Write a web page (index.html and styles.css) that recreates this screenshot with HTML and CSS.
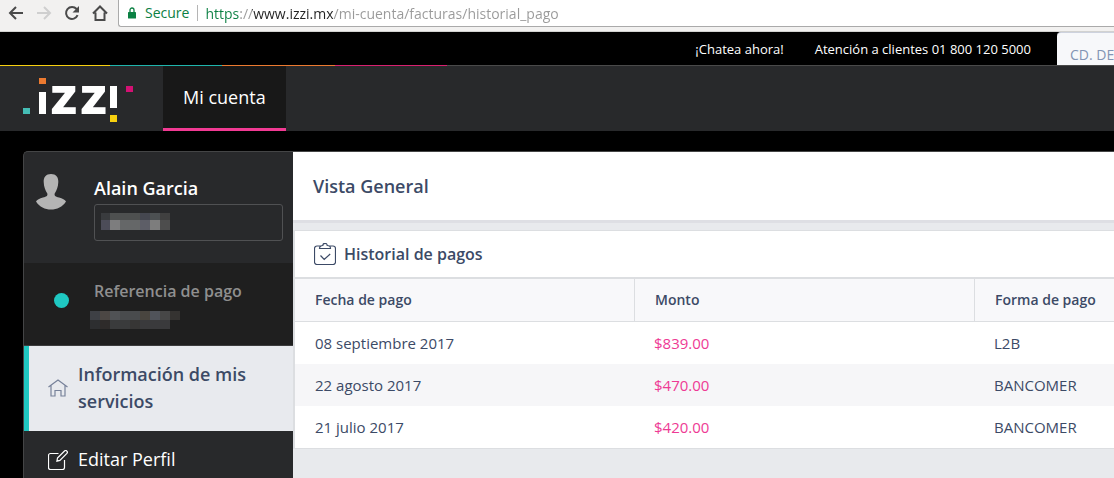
FILE: index.html
```html
<!DOCTYPE html>
<html lang="es">
<head>
<meta charset="utf-8">
<title>Historial de pagos</title>
<link rel="stylesheet" href="styles.css">
</head>
<body>
<div class="browser">
  <div class="nav-buttons">
    <button type="button" aria-label="Atrás"><svg width="16" height="16" viewBox="0 0 16 16"><path class="ink" d="M15 8H2M8 2L2 8l6 6"/></svg></button>
    <button type="button" aria-label="Adelante" class="off"><svg width="16" height="16" viewBox="0 0 16 16"><path class="ink" d="M1 8h13M8 2l6 6-6 6"/></svg></button>
    <button type="button" aria-label="Recargar"><svg width="16" height="16" viewBox="0 0 16 16"><path class="ink" d="M13.6 10.2A6 6 0 1 1 12.6 4L13 4.6"/><path class="solid" d="M15 1v6.500H8.500z"/></svg></button>
    <button type="button" aria-label="Inicio"><svg width="16" height="16" viewBox="0 0 16 16"><path class="ink" d="M1 8.500L8 1.500l7 7M3.500 7.500V15h9V7.500"/></svg></button>
  </div>
  <div class="address">
    <svg class="lock" width="8" height="12" viewBox="0 0 8 12"><path d="M2 5V3a2 2 0 0 1 4 0v2" fill="none" stroke="#0b8043" stroke-width="1.300"/><rect y="5" width="8" height="6.500" rx=".6" fill="#0b8043"/></svg>
    <span class="secure">Secure</span>
    <input class="url" type="text" aria-label="Dirección" value="https://www.izzi.mx/mi-cuenta/facturas/historial_pago">
  </div>
</div>

<div class="topbar">
  <a href="#chat">¡Chatea ahora!</a>
  <a href="#atencion">Atención a clientes 01 800 120 5000</a>
  <select class="city" aria-label="Ciudad"><option>CD. DE</option></select>
</div>
<div class="stripe"></div>

<header class="header">
  <a class="logo" href="#inicio" aria-label="izzi">
    <svg width="110" height="46" viewBox="0 0 110 46">
      <rect x="16" width="7" height="6" fill="#ec7a30"/>
      <rect x="0" y="30" width="7" height="6" fill="#45bdb5"/>
      <rect x="103" y="8" width="7" height="6" fill="#d31173"/>
      <rect x="87" y="37" width="7" height="7" fill="#f7d00f"/>
      <rect x="16" y="14" width="7" height="22" fill="#fff"/>
      <rect x="87" y="8" width="7" height="22" fill="#fff"/>
      <text class="logo-text" x="26" y="36">zz</text>
    </svg>
  </a>
  <nav><a class="tab" href="#cuenta">Mi cuenta</a></nav>
</header>

<div class="layout">
  <aside class="sidebar">
    <section class="profile">
      <svg class="avatar" width="30" height="36" viewBox="0 0 30 36"><path fill="#b4b4b4" d="M15 0c5 0 7.500 3 7.300 8-.2 5-1.500 8-3.600 11.500-.7 2.500 1.300 3.200 4.300 4 3.500 1 6 2 7 4C26.500 33 21 35.500 15 35.500S3.500 33 0 27.500c1-2 3.500-3 7-4 3-.8 5-1.500 4.300-4C9.200 16 7.900 13 7.700 8 7.500 3 10 0 15 0z"/></svg>
      <div class="profile-info">
        <div class="name">Alain Garcia</div>
        <button type="button" class="account" aria-label="Número de cuenta">
          <svg width="69" height="17" viewBox="0 0 69 17" shape-rendering="crispEdges">
            <path fill="#393b3e" d="M0 0h9v7H0z"/><path fill="#4e5050" d="M9 0h30v7H9z"/><path fill="#454750" d="M39 0h10v7H39z"/><path fill="#4c5052" d="M49 0h10v7H49z"/><path fill="#404040" d="M59 0h10v7H59z"/>
            <path fill="#4c4c58" d="M0 7h9v10H0z"/><path fill="#7d7d7e" d="M9 7h10v10H9z"/><path fill="#656768" d="M19 7h20v10H19z"/><path fill="#5d5e67" d="M39 7h10v10H39z"/><path fill="#7d7d7d" d="M49 7h10v10H49z"/><path fill="#4d4d4d" d="M59 7h10v10H59z"/>
          </svg>
        </button>
      </div>
    </section>
    <section class="reference">
      <span class="dot"></span>
      <div class="reference-info">
        <div class="reference-title">Referencia de pago</div>
        <svg width="90" height="18" viewBox="0 0 90 18" shape-rendering="crispEdges">
          <path fill="#3e4045" d="M0 0h10v9H0z"/><path fill="#4c4744" d="M10 0h10v9H10z"/><path fill="#505255" d="M20 0h10v9H20z"/><path fill="#494b4d" d="M30 0h20v9H30z"/><path fill="#49453f" d="M50 0h10v9H50z"/><path fill="#50535a" d="M60 0h10v9H60z"/><path fill="#474747" d="M70 0h10v9H70z"/><path fill="#353331" d="M80 0h10v9H80z"/>
          <path fill="#2d2e30" d="M0 9h10v9H0z"/><path fill="#2e2b2a" d="M10 9h10v9H10z"/><path fill="#3a3b3c" d="M20 9h20v9H20z"/><path fill="#373635" d="M40 9h10v9H40z"/><path fill="#3a3a3c" d="M50 9h30v9H50z"/>
        </svg>
      </div>
    </section>
    <nav class="menu">
      <a class="item active" href="#servicios"><svg width="20" height="18" viewBox="0 0 20 18"><path d="M.5 8L10 1l9.500 7M3 6.500V17h4v-5.500h6V17h4V6.500"/></svg><span>Información de mis servicios</span></a>
      <a class="item" href="#perfil"><svg width="20" height="20" viewBox="0 0 20 20"><path d="M10.500 3.500H2.500a2 2 0 0 0-2 2v12a2 2 0 0 0 2 2h12a2 2 0 0 0 2-2V10M9.500 8l7-7a1.700 1.700 0 0 1 2.400 2.400l-7 7-3 .8z"/></svg><span>Editar Perfil</span></a>
    </nav>
  </aside>

  <main class="content">
    <h1 class="page-title">Vista General</h1>
    <section class="card">
      <h2 class="card-title"><svg width="22" height="22" viewBox="0 0 22 22"><path d="M6.500 3H3a2.500 2.500 0 0 0-2.500 2.500V19A2.500 2.500 0 0 0 3 21.500h16a2.500 2.500 0 0 0 2.500-2.500V5.500A2.500 2.500 0 0 0 19 3h-3.500M5.500 5.500h11c0-2-1.500-3-3.300-3a2.200 2.200 0 0 0-4.400 0C7 2.500 5.500 3.500 5.500 5.500zM6.500 12.500l3.700 4 6-5.500"/></svg>Historial de pagos</h2>
      <table>
        <thead><tr><th>Fecha de pago</th><th>Monto</th><th class="last">Forma de pago</th></tr></thead>
        <tbody>
          <tr><td>08 septiembre 2017</td><td class="amount">$839.00</td><td>L2B</td></tr>
          <tr><td>22 agosto 2017</td><td class="amount">$470.00</td><td>BANCOMER</td></tr>
          <tr><td>21 julio 2017</td><td class="amount">$420.00</td><td>BANCOMER</td></tr>
        </tbody>
      </table>
    </section>
  </main>
</div>
</body>
</html>
```

FILE: styles.css
```css
* { box-sizing: border-box; }
body {
  margin: 0;
  min-height: 100vh;
  display: flex;
  flex-direction: column;
  overflow: hidden;
  background: #000;
  color: #3c4a66;
  font-family: "Open Sans", "Noto Sans", sans-serif;
  font-size: 15px;
}
a { color: inherit; text-decoration: none; }
svg { display: block; flex: none; }
button { border: 0; padding: 0; background: none; font: inherit; }

.browser {
  display: flex;
  height: 32px;
  background: #f2f1f0;
  border-bottom: 1px solid #d2d2d0;
}
.nav-buttons { display: flex; gap: 12px; padding: 5px 10px 0 8px; height: 21px; }
.nav-buttons svg { fill: none; }
.ink { stroke: #4a4a4a; stroke-width: 2; }
.nav-buttons .solid { fill: #4a4a4a; }
.off .ink { stroke: #cfcfcf; }
.address {
  flex: 1;
  display: flex;
  align-items: center;
  height: 27px;
  padding-left: 9px;
  background: #fff;
  border: 1px solid #aaa;
  border-width: 0 0 1px 1px;
  border-radius: 0 0 0 3px;
  font-size: 14px;
}
.lock { margin-right: 9px; }
.secure {
  padding-right: 8px;
  border-right: 1px solid #b5b5b5;
  line-height: 16px;
  color: #0b8043;
}
.url {
  flex: 1;
  min-width: 0;
  border: 0;
  padding: 0;
  margin-left: 7px;
  outline: 0;
  font: inherit;
  background: linear-gradient(90deg, #0b8043 35px, #999 35px 47px, #222 47px 128px, #999 128px);
  -webkit-background-clip: text;
  background-clip: text;
  color: transparent;
}

.topbar {
  display: flex;
  justify-content: flex-end;
  align-items: center;
  gap: 31px;
  height: 33px;
  color: #fff;
  font-size: 13px;
}
.city {
  width: 57px;
  height: 33px;
  margin-left: -5px;
  padding: 10px 0 0 13px;
  appearance: none;
  border: 0;
  border-top: 1px solid #cdd2de;
  border-radius: 4px 0 0 0;
  background: #f7f8fa;
  color: #8294b4;
  font: inherit;
  font-size: 14px;
}
.stripe {
  height: 1px;
  background: linear-gradient(90deg, #f7d00f 110px, #1fb5ad 110px 222px, #ec7a30 222px 335px, #d8206f 335px 447px, #4a4a4a 447px);
}

.header {
  display: flex;
  height: 65px;
  padding-left: 23px;
  background: #28292b;
}
.logo { padding-top: 12px; margin-right: 30px; }
.logo svg { overflow: visible; }
.logo-text { font: 800 51px Inter, sans-serif; fill: #fff; }
.tab {
  display: block;
  height: 65px;
  padding: 0 20px;
  border-bottom: 3px solid #f13a93;
  background: #181818;
  color: #fff;
  font-size: 18px;
  line-height: 62px;
}

.layout {
  flex: 1;
  display: flex;
  margin: 20px 0 0 23px;
}
.sidebar {
  width: 270px;
  flex: none;
  border: 1px solid #444546;
  border-width: 1px 0 0 1px;
  border-radius: 5px 0 0 0;
  background: #28292b;
  color: #fff;
}
.profile {
  display: flex;
  gap: 28px;
  padding: 22px 10px 22px 12px;
}
.profile-info { flex: 1; }
.name { font-size: 18px; font-weight: 600; line-height: 28px; }
.account {
  display: block;
  width: 100%;
  height: 37px;
  margin-top: 2px;
  padding: 0 6px 2px;
  border: 1px solid #505153;
  border-radius: 3px;
}
.reference {
  display: flex;
  align-items: center;
  gap: 21px;
  padding: 15px 0 16px 30px;
  border-bottom: 1px solid #3c3c3d;
  background: #1f1f1f;
}
.dot { width: 15px; height: 15px; margin-top: -7px; border-radius: 50%; background: #1fc8c2; }
.reference-title {
  padding: 0 0 7px 4px;
  color: #8f8f8f;
  font-size: 16px;
  font-weight: 600;
  line-height: 26px;
}
.item {
  display: flex;
  align-items: center;
  gap: 10px;
  padding: 15px 30px 16px 24px;
  font-size: 18px;
  line-height: 27px;
}
.item svg { fill: none; stroke: currentColor; stroke-width: 1.2; }
.active {
  padding-left: 19px;
  border-left: 5px solid #1fc8c2;
  background: #e8eaee;
  color: #3c4a66;
  font-weight: 600;
}
.active svg { stroke: #77829a; }

.content { flex: 1; min-width: 0; background: #e8eaed; }
.page-title {
  margin: 0;
  padding: 22px 20px 21px;
  border-top: 1px solid #444546;
  border-bottom: 3px solid #dedfe4;
  background: #fff;
  font-size: 18px;
  font-weight: 600;
  line-height: 25px;
}
.card {
  margin-top: 7px;
  border: 1px solid #dcdee1;
  border-width: 1px 0 1px 2px;
  background: #fff;
}
.card-title {
  display: flex;
  align-items: center;
  gap: 8px;
  margin: 0;
  padding: 0 19px;
  font-size: 16px;
  font-weight: 600;
  line-height: 46px;
}
.card-title svg { fill: none; stroke: #3c4a66; stroke-width: 1.2; }
table {
  width: 100%;
  table-layout: fixed;
  border-collapse: separate;
  border-spacing: 0;
  border-top: 2px solid #dcdee1;
}
th {
  width: 340px;
  padding: 0 20px;
  border: 1px solid #dcdee1;
  border-width: 0 1px 1px 0;
  background: #f8f8fa;
  font-size: 14px;
  font-weight: 600;
  line-height: 42px;
  text-align: left;
}
.last { width: auto; padding-right: 0; border-right: 0; }
td { padding: 0 19px; line-height: 42px; }
td:first-child { padding-left: 20px; }
tbody tr:nth-child(even) { background: #f6f6f8; }
.amount { color: #ee3a94; }
```
